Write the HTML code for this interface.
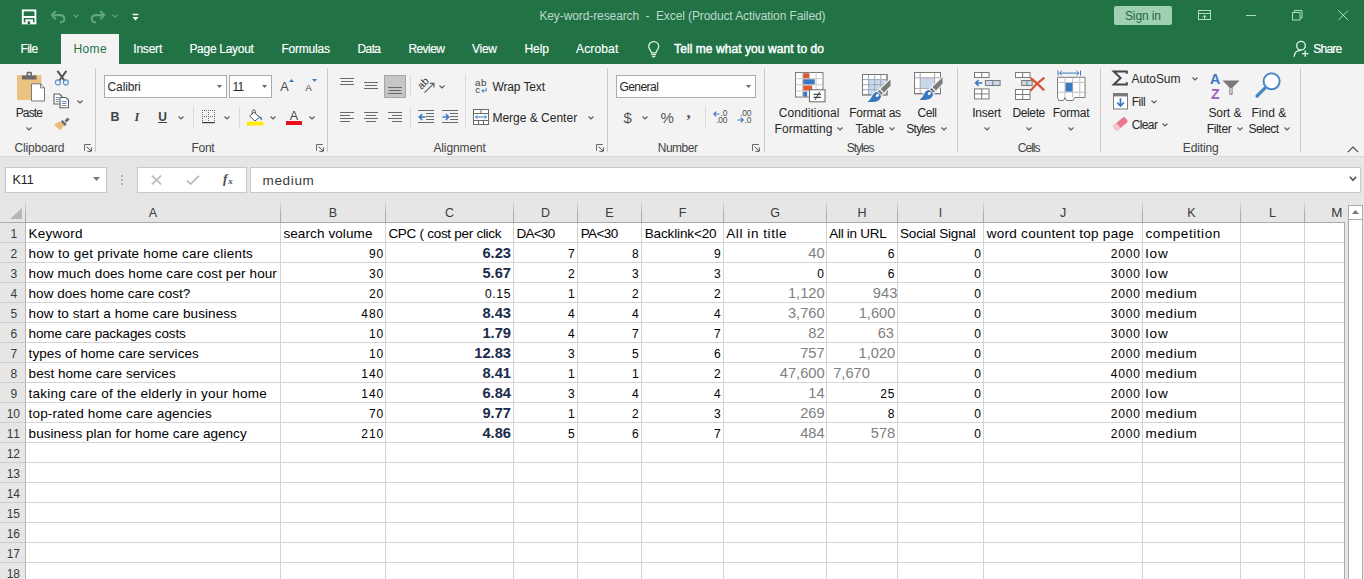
<!DOCTYPE html><html><head><meta charset="utf-8"><title>Key-word-research - Excel</title><style>
*{margin:0;padding:0;box-sizing:border-box}
html,body{width:1364px;height:579px;overflow:hidden;background:#fff}
body{font-family:"Liberation Sans",sans-serif;position:relative;color:#262626}
.a{position:absolute}
.t{position:absolute;white-space:pre;line-height:1;font-family:"Liberation Sans",sans-serif}
svg{position:absolute;overflow:visible}
</style></head><body>
<div class="a" style="left:0px;top:0px;width:1364px;height:64px;background:#217346;"></div>
<div class="a" style="left:0px;top:64px;width:1364px;height:93px;background:#f3f3f3;"></div>
<div class="a" style="left:0px;top:156px;width:1364px;height:1px;background:#dadada;"></div>
<div class="a" style="left:0px;top:157px;width:1364px;height:66px;background:#e6e6e6;"></div>
<div class="a" style="left:61px;top:34px;width:58px;height:30px;background:#f3f3f3;"></div>
<svg style="left:21px;top:9px" width="16" height="16" viewBox="0 0 16 16">
<rect x="1.8" y="1.4" width="12.6" height="13" fill="none" stroke="#fff" stroke-width="1.9"/>
<rect x="2" y="7" width="12" height="2" fill="#fff"/>
<rect x="4.4" y="10.4" width="7.6" height="4.6" fill="#fff"/>
<rect x="6.6" y="12.3" width="2.6" height="2.8" fill="#217346"/>
</svg>
<svg style="left:50px;top:9px" width="16" height="15" viewBox="0 0 16 15">
<path d="M5.8 2 L1.8 6.1 L5.8 10.2" fill="none" stroke="#62a380" stroke-width="2.1"/>
<path d="M2.2 6.1 H9.8 C12.6 6.1 14.3 7.8 14.3 10 C14.3 12.2 12.8 13.4 10 13.4" fill="none" stroke="#62a380" stroke-width="2.1"/>
</svg>
<svg style="left:72.5px;top:14.3px" width="6" height="4" viewBox="0 0 6 4"><path d="M0.5 0.6 L3 3.1 L5.5 0.6" fill="none" stroke="#62a380" stroke-width="1.3"/></svg>
<svg style="left:89.5px;top:9px" width="16" height="15" viewBox="0 0 16 15">
<g transform="translate(16,0) scale(-1,1)">
<path d="M5.8 2 L1.8 6.1 L5.8 10.2" fill="none" stroke="#62a380" stroke-width="2.1"/>
<path d="M2.2 6.1 H9.8 C12.6 6.1 14.3 7.8 14.3 10 C14.3 12.2 12.8 13.4 10 13.4" fill="none" stroke="#62a380" stroke-width="2.1"/>
</g></svg>
<svg style="left:111.5px;top:14.3px" width="6" height="4" viewBox="0 0 6 4"><path d="M0.5 0.6 L3 3.1 L5.5 0.6" fill="none" stroke="#62a380" stroke-width="1.3"/></svg>
<svg style="left:132px;top:13px" width="7" height="8" viewBox="0 0 7 8"><rect x="0.6" y="0.8" width="5.8" height="1.4" fill="#fff"/><path d="M0.4 3.9 H6.6 L3.5 7.6 Z" fill="#fff"/></svg>
<div class="a" style="left:1114px;top:6px;width:58px;height:19px;background:#a0d0b4;border-radius:2px;"></div>
<svg style="left:1197px;top:9px" width="15" height="12" viewBox="0 0 15 12">
<rect x="1.5" y="1.5" width="12" height="9" fill="none" stroke="#b4dcc6" stroke-width="1"/>
<rect x="1.5" y="4" width="12" height="1" fill="#b4dcc6"/>
<path d="M7.5 10.5 V6.4 M5.3 8.4 L7.5 6.2 L9.7 8.4" fill="none" stroke="#b4dcc6" stroke-width="1"/>
</svg>
<div class="a" style="left:1246px;top:15px;width:10px;height:1px;background:#aadcc0;"></div>
<svg style="left:1292px;top:10px" width="11" height="11" viewBox="0 0 11 11">
<rect x="0.5" y="2.5" width="7.5" height="7.5" fill="none" stroke="#aadcc0" stroke-width="1"/>
<path d="M2.5 2.5 V0.5 H10 V8 H8" fill="none" stroke="#aadcc0" stroke-width="1"/>
</svg>
<svg style="left:1338px;top:10px" width="11" height="11" viewBox="0 0 11 11"><path d="M0.3 0.3 L10.2 10.2 M10.2 0.3 L0.3 10.2" stroke="#aadcc0" stroke-width="1" fill="none"/></svg>
<svg style="left:647px;top:40px" width="14" height="18" viewBox="0 0 14 18">
<path d="M4.4 12.8 C4.4 10.6 1.7 9.4 1.7 6.6 C1.7 3.7 3.9 1.7 6.7 1.7 C9.5 1.7 11.7 3.7 11.7 6.6 C11.7 9.4 9 10.6 9 12.8 Z" fill="none" stroke="#e4f7ec" stroke-width="1.25"/>
<path d="M4.4 14.6 H9 M5.2 16.6 H8.2" stroke="#e4f7ec" stroke-width="1.1" fill="none"/>
</svg>
<svg style="left:1293px;top:40px" width="17" height="18" viewBox="0 0 17 18">
<circle cx="8" cy="5.7" r="4.3" fill="none" stroke="#e4f7ec" stroke-width="1.3"/>
<path d="M1.3 16.8 C1.3 12.8 4 10.6 7.4 10.4" fill="none" stroke="#e4f7ec" stroke-width="1.3"/>
<path d="M12.2 10.4 V16.8 M9 13.6 H15.4" stroke="#e4f7ec" stroke-width="1.3" fill="none"/>
</svg>
<div class="a" style="left:95px;top:68px;width:1px;height:84px;background:#c9c9c9;"></div>
<div class="a" style="left:327px;top:68px;width:1px;height:84px;background:#c9c9c9;"></div>
<div class="a" style="left:607px;top:68px;width:1px;height:84px;background:#c9c9c9;"></div>
<div class="a" style="left:764px;top:68px;width:1px;height:84px;background:#c9c9c9;"></div>
<div class="a" style="left:957px;top:68px;width:1px;height:84px;background:#c9c9c9;"></div>
<div class="a" style="left:1100px;top:68px;width:1px;height:84px;background:#c9c9c9;"></div>
<div class="a" style="left:1300px;top:68px;width:1px;height:84px;background:#c9c9c9;"></div>
<svg style="left:16px;top:71px" width="30" height="31" viewBox="0 0 30 31">
<rect x="1" y="4" width="24.5" height="25" rx="1" fill="#eac282"/>
<path d="M6 8.5 V4.5 H10.5 V2.2 Q10.5 0.8 12 0.8 H14.5 Q16 0.8 16 2.2 V4.5 H20.5 V8.5 Z" fill="#6a6a6a"/>
<rect x="12.2" y="2.2" width="2.2" height="2" fill="#f3f3f3"/>
<path d="M15.5 12.8 H24.5 L28.5 16.8 V30 H15.5 Z" fill="#fff" stroke="#7a7a7a" stroke-width="1"/>
<path d="M24.5 12.8 V16.8 H28.5" fill="none" stroke="#7a7a7a" stroke-width="1"/>
</svg>
<svg style="left:26.3px;top:126.6px" width="6" height="4" viewBox="0 0 6 4"><path d="M0.5 0.5 L3.0 3.0 L5.5 0.5" fill="none" stroke="#5a5a5a" stroke-width="1.1"/></svg>
<svg style="left:53.5px;top:69.5px" width="16" height="16" viewBox="0 0 16 16">
<path d="M3.4 0.8 L10.8 11 M12.4 0.8 L5 11" fill="none" stroke="#505050" stroke-width="2"/>
<circle cx="3.9" cy="12.4" r="2.5" fill="none" stroke="#5f93d1" stroke-width="1.2"/>
<circle cx="11.9" cy="12.4" r="2.5" fill="none" stroke="#5f93d1" stroke-width="1.2"/>
</svg>
<svg style="left:52.5px;top:93px" width="17" height="16" viewBox="0 0 17 16">
<path d="M1 1 H6.5 L9 3.5 V11 H1 Z" fill="#fff" stroke="#5e5e5e" stroke-width="1.1"/>
<path d="M2.8 4.5 H6 M2.8 6.5 H6 M2.8 8.5 H6" stroke="#5b86b8" stroke-width="0.9"/>
<path d="M7 4.5 H12.8 L15.5 7.2 V14.8 H7 Z" fill="#fff" stroke="#5e5e5e" stroke-width="1.1"/>
<path d="M8.8 8.5 H13.6 M8.8 10.5 H13.6 M8.8 12.5 H13.6" stroke="#5b86b8" stroke-width="0.9"/>
</svg>
<svg style="left:76.8px;top:99.8px" width="6" height="4" viewBox="0 0 6 4"><path d="M0.5 0.5 L3.0 3.0 L5.5 0.5" fill="none" stroke="#5a5a5a" stroke-width="1.1"/></svg>
<svg style="left:52.5px;top:116px" width="18" height="16" viewBox="0 0 18 16">
<path d="M7.2 5.2 L11.4 9.4 L6.8 14.6 L0.8 8.4 Z" fill="#eabf7c"/>
<path d="M8 4.4 L12.2 8.6 L14 6.8 L9.8 2.6 Z" fill="#6a6a6a" transform="translate(-0.2,1.4)"/>
<path d="M11.6 4.6 L14.6 1.4 L16.6 3.4 L13.4 6.4 Z" fill="#6a6a6a"/>
</svg>
<svg style="left:84px;top:144px" width="8" height="8" viewBox="0 0 8 8"><path d="M0.5 6.8 V0.5 H6.8" fill="none" stroke="#666" stroke-width="1"/><path d="M2.6 2.6 L7 7 M7.3 3.4 V7.3 H3.4" fill="none" stroke="#555" stroke-width="1"/></svg>
<div class="a" style="left:104px;top:75px;width:123px;height:23px;background:#fff;border:1px solid #ababab;"></div>
<svg style="left:217px;top:85px" width="5" height="3" viewBox="0 0 5 3"><path d="M0 0 H5 L2.5 3 Z" fill="#666"/></svg>
<div class="a" style="left:229px;top:75px;width:43px;height:23px;background:#fff;border:1px solid #ababab;"></div>
<svg style="left:262px;top:85px" width="5" height="3" viewBox="0 0 5 3"><path d="M0 0 H5 L2.5 3 Z" fill="#666"/></svg>
<svg style="left:288.5px;top:78.8px" width="5" height="3" viewBox="0 0 5 3"><path d="M0 3 H5 L2.5 0 Z" fill="#3b78c2"/></svg>
<svg style="left:312px;top:78.8px" width="5" height="3" viewBox="0 0 5 3"><path d="M0 0 H5 L2.5 3 Z" fill="#3b78c2"/></svg>
<div class="a" style="left:158px;top:122px;width:9px;height:1px;background:#444;"></div>
<svg style="left:178.2px;top:116px" width="6" height="4" viewBox="0 0 6 4"><path d="M0.5 0.5 L3.0 3.0 L5.5 0.5" fill="none" stroke="#5a5a5a" stroke-width="1.1"/></svg>
<div class="a" style="left:193px;top:107px;width:1px;height:21px;background:#dadada;"></div>
<svg style="left:202px;top:110px" width="14" height="14" viewBox="0 0 14 14"><g fill="#6e6e6e"><rect x="0" y="0" width="1" height="1"/><rect x="6" y="0" width="1" height="1"/><rect x="12" y="0" width="1" height="1"/><rect x="0" y="0" width="1" height="1"/><rect x="0" y="6" width="1" height="1"/><rect x="0" y="2" width="1" height="1"/><rect x="6" y="2" width="1" height="1"/><rect x="12" y="2" width="1" height="1"/><rect x="2" y="0" width="1" height="1"/><rect x="2" y="6" width="1" height="1"/><rect x="0" y="4" width="1" height="1"/><rect x="6" y="4" width="1" height="1"/><rect x="12" y="4" width="1" height="1"/><rect x="4" y="0" width="1" height="1"/><rect x="4" y="6" width="1" height="1"/><rect x="0" y="6" width="1" height="1"/><rect x="6" y="6" width="1" height="1"/><rect x="12" y="6" width="1" height="1"/><rect x="6" y="0" width="1" height="1"/><rect x="6" y="6" width="1" height="1"/><rect x="0" y="8" width="1" height="1"/><rect x="6" y="8" width="1" height="1"/><rect x="12" y="8" width="1" height="1"/><rect x="8" y="0" width="1" height="1"/><rect x="8" y="6" width="1" height="1"/><rect x="0" y="10" width="1" height="1"/><rect x="6" y="10" width="1" height="1"/><rect x="12" y="10" width="1" height="1"/><rect x="10" y="0" width="1" height="1"/><rect x="10" y="6" width="1" height="1"/><rect x="0" y="12" width="1" height="1"/><rect x="6" y="12" width="1" height="1"/><rect x="12" y="12" width="1" height="1"/><rect x="12" y="0" width="1" height="1"/><rect x="12" y="6" width="1" height="1"/></g><rect x="0" y="12" width="13" height="1.2" fill="#3a3a3a"/></svg>
<svg style="left:224.3px;top:116px" width="6" height="4" viewBox="0 0 6 4"><path d="M0.5 0.5 L3.0 3.0 L5.5 0.5" fill="none" stroke="#5a5a5a" stroke-width="1.1"/></svg>
<div class="a" style="left:239px;top:107px;width:1px;height:21px;background:#dadada;"></div>
<svg style="left:247px;top:108.5px" width="17" height="17" viewBox="0 0 17 17">
<path d="M6.8 3.2 L12.6 8.2 L8 12 L2.6 7.2 Z" fill="#fff" stroke="#5a5a5a" stroke-width="1"/>
<path d="M5.2 5.6 V2.6 Q5.2 0.8 6.8 0.8 Q8.4 0.8 8.4 2.6 V4.4" fill="none" stroke="#5a5a5a" stroke-width="1"/>
<path d="M12.8 7 Q15.8 8.6 15 11.6 Q13 10 12.2 8.6 Z" fill="#3b78c2"/>
<rect x="0" y="12.6" width="16.4" height="3.9" fill="#ffec00"/>
</svg>
<svg style="left:270px;top:116px" width="6" height="4" viewBox="0 0 6 4"><path d="M0.5 0.5 L3.0 3.0 L5.5 0.5" fill="none" stroke="#5a5a5a" stroke-width="1.1"/></svg>
<div class="a" style="left:286px;top:121px;width:16px;height:4px;background:#e8111a;"></div>
<svg style="left:309.2px;top:116px" width="6" height="4" viewBox="0 0 6 4"><path d="M0.5 0.5 L3.0 3.0 L5.5 0.5" fill="none" stroke="#5a5a5a" stroke-width="1.1"/></svg>
<svg style="left:316px;top:144px" width="8" height="8" viewBox="0 0 8 8"><path d="M0.5 6.8 V0.5 H6.8" fill="none" stroke="#666" stroke-width="1"/><path d="M2.6 2.6 L7 7 M7.3 3.4 V7.3 H3.4" fill="none" stroke="#555" stroke-width="1"/></svg>
<div class="a" style="left:340px;top:78px;width:14px;height:1px;background:#6a6a6a;"></div>
<div class="a" style="left:341px;top:81px;width:12px;height:1px;background:#6a6a6a;"></div>
<div class="a" style="left:340px;top:84px;width:14px;height:1px;background:#6a6a6a;"></div>
<div class="a" style="left:364px;top:82px;width:14px;height:1px;background:#6a6a6a;"></div>
<div class="a" style="left:365px;top:85px;width:12px;height:1px;background:#6a6a6a;"></div>
<div class="a" style="left:364px;top:88px;width:14px;height:1px;background:#6a6a6a;"></div>
<div class="a" style="left:384px;top:75px;width:22px;height:23px;background:#c6c6c6;border:1px solid #a6a6a6;"></div>
<div class="a" style="left:388px;top:87px;width:14px;height:1px;background:#6a6a6a;"></div>
<div class="a" style="left:389px;top:90px;width:12px;height:1px;background:#6a6a6a;"></div>
<div class="a" style="left:388px;top:93px;width:14px;height:1px;background:#6a6a6a;"></div>
<div class="a" style="left:410px;top:76px;width:1px;height:21px;background:#dadada;"></div>
<div class="a" style="left:410px;top:107px;width:1px;height:21px;background:#dadada;"></div>
<svg style="left:417px;top:77px" width="19" height="17" viewBox="0 0 19 17">
<g transform="translate(4.4,12.9) rotate(-45)"><text x="0" y="0" font-family="Liberation Sans" font-size="10.5" fill="#3c3c3c">ab</text></g>
<path d="M7.5 15.6 L16.8 6.6" stroke="#5a5a5a" stroke-width="1.1" fill="none"/>
<path d="M13 6.4 H17 V10.4" stroke="#5a5a5a" stroke-width="1.1" fill="none"/>
</svg>
<svg style="left:439.3px;top:84.6px" width="6" height="4" viewBox="0 0 6 4"><path d="M0.5 0.5 L3.0 3.0 L5.5 0.5" fill="none" stroke="#5a5a5a" stroke-width="1.1"/></svg>
<div class="a" style="left:465px;top:74px;width:1px;height:55px;background:#dadada;"></div>
<svg style="left:481px;top:88px" width="6" height="5" viewBox="0 0 6 5"><path d="M5.2 0 V2.8 H1" fill="none" stroke="#3b78c2" stroke-width="1"/><path d="M2.6 1 L0.8 2.8 L2.6 4.6" fill="none" stroke="#3b78c2" stroke-width="1"/></svg>
<div class="a" style="left:340px;top:112px;width:14px;height:1px;background:#6a6a6a;"></div>
<div class="a" style="left:340px;top:115px;width:10px;height:1px;background:#6a6a6a;"></div>
<div class="a" style="left:340px;top:118px;width:14px;height:1px;background:#6a6a6a;"></div>
<div class="a" style="left:340px;top:121px;width:10px;height:1px;background:#6a6a6a;"></div>
<div class="a" style="left:364px;top:112px;width:14px;height:1px;background:#6a6a6a;"></div>
<div class="a" style="left:366px;top:115px;width:10px;height:1px;background:#6a6a6a;"></div>
<div class="a" style="left:364px;top:118px;width:14px;height:1px;background:#6a6a6a;"></div>
<div class="a" style="left:366px;top:121px;width:10px;height:1px;background:#6a6a6a;"></div>
<div class="a" style="left:388px;top:112px;width:14px;height:1px;background:#6a6a6a;"></div>
<div class="a" style="left:392px;top:115px;width:10px;height:1px;background:#6a6a6a;"></div>
<div class="a" style="left:388px;top:118px;width:14px;height:1px;background:#6a6a6a;"></div>
<div class="a" style="left:392px;top:121px;width:10px;height:1px;background:#6a6a6a;"></div>
<div class="a" style="left:418px;top:110px;width:16px;height:1px;background:#6a6a6a;"></div>
<div class="a" style="left:426px;top:113px;width:8px;height:1px;background:#6a6a6a;"></div>
<div class="a" style="left:426px;top:116px;width:8px;height:1px;background:#6a6a6a;"></div>
<div class="a" style="left:426px;top:119px;width:8px;height:1px;background:#6a6a6a;"></div>
<div class="a" style="left:418px;top:122px;width:16px;height:1px;background:#6a6a6a;"></div>
<svg style="left:417.5px;top:112.5px" width="8" height="8" viewBox="0 0 8 8"><path d="M7.5 4 H1.5 M4.2 1 L1.2 4 L4.2 7" fill="none" stroke="#3b78c2" stroke-width="1.5"/></svg>
<div class="a" style="left:442px;top:110px;width:16px;height:1px;background:#6a6a6a;"></div>
<div class="a" style="left:450px;top:113px;width:8px;height:1px;background:#6a6a6a;"></div>
<div class="a" style="left:450px;top:116px;width:8px;height:1px;background:#6a6a6a;"></div>
<div class="a" style="left:450px;top:119px;width:8px;height:1px;background:#6a6a6a;"></div>
<div class="a" style="left:442px;top:122px;width:16px;height:1px;background:#6a6a6a;"></div>
<svg style="left:441.5px;top:112.5px" width="8" height="8" viewBox="0 0 8 8"><path d="M0.5 4 H6.5 M3.8 1 L6.8 4 L3.8 7" fill="none" stroke="#3b78c2" stroke-width="1.5"/></svg>
<svg style="left:472.5px;top:108.5px" width="16" height="16" viewBox="0 0 16 16">
<rect x="0.5" y="0.5" width="15" height="15" fill="#fff" stroke="#6a6a6a" stroke-width="1"/>
<path d="M0.5 4.5 H15.5 M0.5 11.5 H15.5 M8 0.5 V4.5 M5.5 11.5 V15.5 M10.5 11.5 V15.5" stroke="#6a6a6a" stroke-width="1" fill="none"/>
<path d="M2.5 8 H13.5 M4.5 6.2 L2.6 8 L4.5 9.8 M11.5 6.2 L13.4 8 L11.5 9.8" stroke="#3b78c2" stroke-width="1" fill="none"/>
</svg>
<svg style="left:588.4px;top:115.8px" width="6" height="4" viewBox="0 0 6 4"><path d="M0.5 0.5 L3.0 3.0 L5.5 0.5" fill="none" stroke="#5a5a5a" stroke-width="1.1"/></svg>
<svg style="left:596px;top:144px" width="8" height="8" viewBox="0 0 8 8"><path d="M0.5 6.8 V0.5 H6.8" fill="none" stroke="#666" stroke-width="1"/><path d="M2.6 2.6 L7 7 M7.3 3.4 V7.3 H3.4" fill="none" stroke="#555" stroke-width="1"/></svg>
<div class="a" style="left:616px;top:75px;width:140px;height:23px;background:#fff;border:1px solid #ababab;"></div>
<svg style="left:746px;top:85px" width="5" height="3" viewBox="0 0 5 3"><path d="M0 0 H5 L2.5 3 Z" fill="#666"/></svg>
<svg style="left:642.2px;top:116px" width="6" height="4" viewBox="0 0 6 4"><path d="M0.5 0.5 L3.0 3.0 L5.5 0.5" fill="none" stroke="#5a5a5a" stroke-width="1.1"/></svg>
<div class="a" style="left:705px;top:107px;width:1px;height:21px;background:#dadada;"></div>
<svg style="left:713px;top:110.5px" width="7" height="6" viewBox="0 0 7 6"><path d="M6.5 3 H1 M3.2 0.6 L0.8 3 L3.2 5.4" fill="none" stroke="#3b78c2" stroke-width="1.2"/></svg>
<svg style="left:737px;top:117px" width="7" height="6" viewBox="0 0 7 6"><path d="M0.5 3 H6 M3.8 0.6 L6.2 3 L3.8 5.4" fill="none" stroke="#3b78c2" stroke-width="1.2"/></svg>
<svg style="left:752px;top:144px" width="8" height="8" viewBox="0 0 8 8"><path d="M0.5 6.8 V0.5 H6.8" fill="none" stroke="#666" stroke-width="1"/><path d="M2.6 2.6 L7 7 M7.3 3.4 V7.3 H3.4" fill="none" stroke="#555" stroke-width="1"/></svg>
<svg style="left:794.5px;top:71.5px" width="32" height="31" viewBox="0 0 32 31">
<rect x="0.5" y="0.5" width="27.5" height="24.5" fill="#fff" stroke="#7a7a7a" stroke-width="1"/>
<path d="M0.5 6.6 H28 M0.5 12.8 H28 M0.5 19 H28 M7.5 0.5 V25 M14.3 0.5 V25 M21.1 0.5 V25" stroke="#c8c8c8" stroke-width="1" fill="none"/>
<rect x="8.2" y="1.2" width="6" height="5" fill="#e05a2f"/>
<rect x="8.2" y="7.3" width="11.6" height="5" fill="#3b78c2"/>
<rect x="8.2" y="13.5" width="9" height="5" fill="#e05a2f"/>
<rect x="8.2" y="19.7" width="4" height="5" fill="#3b78c2"/>
<rect x="14.5" y="17.8" width="15.5" height="12" fill="#fff" stroke="#6a6a6a" stroke-width="1"/>
<path d="M18.6 22.4 H26 M18.6 25.4 H26 M24.6 20 L20.2 27.8" stroke="#444" stroke-width="1.1" fill="none"/>
</svg>
<svg style="left:837.2px;top:126.7px" width="6" height="4" viewBox="0 0 6 4"><path d="M0.5 0.5 L3.0 3.0 L5.5 0.5" fill="none" stroke="#5a5a5a" stroke-width="1.1"/></svg>
<svg style="left:862px;top:73.6px" width="26" height="22" viewBox="0 0 26 22">
<rect x="0.5" y="0.5" width="24.5" height="20.4" fill="#fff" stroke="#7a7a7a" stroke-width="1"/>
<rect x="6.6" y="5.6" width="18" height="15" fill="#c9d8ea"/>
<path d="M0.5 5.6 H25 M0.5 10.7 H25 M0.5 15.8 H25 M6.6 0.5 V21 M12.7 0.5 V21 M18.8 0.5 V21" stroke="#9aa7b8" stroke-width="1" fill="none"/>
<rect x="0.5" y="0.5" width="24.5" height="20.4" fill="none" stroke="#7a7a7a" stroke-width="1"/>
</svg>
<svg style="left:867.3px;top:78.5px" width="24" height="24" viewBox="0 0 24 24">
<path d="M23.4 0.4 L23.6 6.6 L17 13.4 L13.6 10 Z" fill="none" stroke="#f3f3f3" stroke-width="2.4"/><path d="M12.6 10.8 L16 14.2 L14.4 15.8 L11 12.4 Z" fill="none" stroke="#f3f3f3" stroke-width="2.4"/><path d="M10.2 13 Q6.6 13.4 5.4 16.6 Q4 20.4 0.4 22.9 Q9.4 23.6 12.6 20.4 Q15 17.6 13.4 15.8 Z" fill="none" stroke="#f3f3f3" stroke-width="2.4"/>
<path d="M23.4 0.4 L23.6 6.6 L17 13.4 L13.6 10 Z" fill="#7a7a7a"/>
<path d="M12.6 10.8 L16 14.2 L14.4 15.8 L11 12.4 Z" fill="#7a7a7a"/>
<path d="M10.2 13 Q6.6 13.4 5.4 16.6 Q4 20.4 0.4 22.9 Q9.4 23.6 12.6 20.4 Q15 17.6 13.4 15.8 Z" fill="#3b78c2"/>
<ellipse cx="10.4" cy="16.4" rx="1.7" ry="1.3" fill="#fff" transform="rotate(-35 10.4 16.4)"/>
</svg>
<svg style="left:889px;top:126.7px" width="6" height="4" viewBox="0 0 6 4"><path d="M0.5 0.5 L3.0 3.0 L5.5 0.5" fill="none" stroke="#5a5a5a" stroke-width="1.1"/></svg>
<svg style="left:913.5px;top:71.5px" width="28" height="23" viewBox="0 0 28 23">
<rect x="0.5" y="0.5" width="26" height="21.2" fill="#fff" stroke="#7a7a7a" stroke-width="1"/>
<rect x="6.2" y="5.8" width="14.4" height="10.6" fill="#c9d8ea"/>
<path d="M0.5 5.8 H26.5 M0.5 16.4 H26.5 M6.2 0.5 V21.7 M20.6 0.5 V21.7" stroke="#a8a8a8" stroke-width="1" fill="none"/>
<rect x="0.5" y="0.5" width="26" height="21.2" fill="none" stroke="#7a7a7a" stroke-width="1"/>
</svg>
<svg style="left:919.2px;top:76.8px" width="24" height="24" viewBox="0 0 24 24">
<path d="M23.4 0.4 L23.6 6.6 L17 13.4 L13.6 10 Z" fill="none" stroke="#f3f3f3" stroke-width="2.4"/><path d="M12.6 10.8 L16 14.2 L14.4 15.8 L11 12.4 Z" fill="none" stroke="#f3f3f3" stroke-width="2.4"/><path d="M10.2 13 Q6.6 13.4 5.4 16.6 Q4 20.4 0.4 22.9 Q9.4 23.6 12.6 20.4 Q15 17.6 13.4 15.8 Z" fill="none" stroke="#f3f3f3" stroke-width="2.4"/>
<path d="M23.4 0.4 L23.6 6.6 L17 13.4 L13.6 10 Z" fill="#7a7a7a"/>
<path d="M12.6 10.8 L16 14.2 L14.4 15.8 L11 12.4 Z" fill="#7a7a7a"/>
<path d="M10.2 13 Q6.6 13.4 5.4 16.6 Q4 20.4 0.4 22.9 Q9.4 23.6 12.6 20.4 Q15 17.6 13.4 15.8 Z" fill="#3b78c2"/>
<ellipse cx="10.4" cy="16.4" rx="1.7" ry="1.3" fill="#fff" transform="rotate(-35 10.4 16.4)"/>
</svg>
<svg style="left:940.5px;top:126.7px" width="6" height="4" viewBox="0 0 6 4"><path d="M0.5 0.5 L3.0 3.0 L5.5 0.5" fill="none" stroke="#5a5a5a" stroke-width="1.1"/></svg>
<svg style="left:974px;top:72px" width="27" height="28" viewBox="0 0 27 28">
<rect x="0.5" y="0.5" width="14.5" height="5" fill="#fff" stroke="#7a7a7a"/><path d="M7.7 0.5 V5.5" stroke="#7a7a7a"/>
<rect x="11.4" y="8.5" width="14.7" height="5" fill="#c9d8ea" stroke="#7a7a7a"/><path d="M18.8 8.5 V13.5" stroke="#7a7a7a"/>
<path d="M8.2 11 H2 M4.6 8.2 L1.6 11 L4.6 13.8" fill="none" stroke="#3b78c2" stroke-width="1.6"/>
<rect x="0.5" y="16.9" width="14.5" height="10" fill="#fff" stroke="#7a7a7a"/><path d="M7.7 16.9 V26.9 M0.5 21.9 H15" stroke="#7a7a7a"/>
</svg>
<svg style="left:984px;top:126.7px" width="6" height="4" viewBox="0 0 6 4"><path d="M0.5 0.5 L3.0 3.0 L5.5 0.5" fill="none" stroke="#5a5a5a" stroke-width="1.1"/></svg>
<svg style="left:1015px;top:72px" width="31" height="29" viewBox="0 0 31 29">
<rect x="0.5" y="0.5" width="14.5" height="5" fill="#fff" stroke="#7a7a7a"/><path d="M7.7 0.5 V5.5" stroke="#7a7a7a"/>
<rect x="6.7" y="8.5" width="10.5" height="5" fill="#c9d8ea" stroke="#7a7a7a"/><path d="M12 8.5 V13.5" stroke="#7a7a7a"/>
<rect x="0.5" y="17.5" width="14.5" height="10" fill="#fff" stroke="#7a7a7a"/><path d="M7.7 17.5 V27.5 M0.5 22.5 H15" stroke="#7a7a7a"/>
<path d="M15.6 6 Q22 11 29.2 18.4 M29.4 5.6 Q21 11.6 15.4 18.8" fill="none" stroke="#d9553a" stroke-width="2.3"/>
</svg>
<svg style="left:1026.3px;top:126.7px" width="6" height="4" viewBox="0 0 6 4"><path d="M0.5 0.5 L3.0 3.0 L5.5 0.5" fill="none" stroke="#5a5a5a" stroke-width="1.1"/></svg>
<svg style="left:1056.5px;top:70px" width="29" height="32" viewBox="0 0 29 32">
<path d="M1 0.6 V5.6 M23.5 0.6 V5.6 M2.5 3.1 H22 M5 0.8 L2.6 3.1 L5 5.4 M19.5 0.8 L21.9 3.1 L19.5 5.4" fill="none" stroke="#3b78c2" stroke-width="1"/>
<path d="M0.5 7.3 H28 V27.5 H17.5 L16 30.5 H9.5 L8 27.5 L6.5 30.5 H1.8 L0.5 27.5 Z" fill="#fff" stroke="#7a7a7a" stroke-width="1"/>
<path d="M0.5 12.4 H28 M0.5 22.2 H28 M8 7.3 V27.5 M15.6 7.3 V27.5 M22.8 7.3 V27.5" stroke="#c0c0c0" stroke-width="1" fill="none"/>
<rect x="8.5" y="13" width="7" height="8.6" fill="#3b78c2"/>
</svg>
<svg style="left:1068px;top:126.7px" width="6" height="4" viewBox="0 0 6 4"><path d="M0.5 0.5 L3.0 3.0 L5.5 0.5" fill="none" stroke="#5a5a5a" stroke-width="1.1"/></svg>
<svg style="left:1111.5px;top:69.5px" width="17" height="16" viewBox="0 0 17 16">
<path d="M14.8 3.8 V1.4 H1.8 L8.6 8 L1.8 14.6 H14.8 V12.2" fill="none" stroke="#454545" stroke-width="2"/>
</svg>
<svg style="left:1192.3px;top:76.7px" width="6" height="4" viewBox="0 0 6 4"><path d="M0.5 0.5 L3.0 3.0 L5.5 0.5" fill="none" stroke="#5a5a5a" stroke-width="1.1"/></svg>
<svg style="left:1112.5px;top:92.7px" width="15" height="17" viewBox="0 0 15 17">
<rect x="0.5" y="0.5" width="14" height="15.5" fill="#fff" stroke="#7a7a7a"/>
<rect x="0" y="0" width="15" height="3.4" fill="#7a7a7a"/>
<path d="M7.5 5.2 V13 M4.2 9.6 L7.5 13 L10.8 9.6" fill="none" stroke="#3b78c2" stroke-width="1.7"/>
</svg>
<svg style="left:1150.5px;top:99.7px" width="6" height="4" viewBox="0 0 6 4"><path d="M0.5 0.5 L3.0 3.0 L5.5 0.5" fill="none" stroke="#5a5a5a" stroke-width="1.1"/></svg>
<svg style="left:1112.5px;top:116.5px" width="15" height="14" viewBox="0 0 15 14">
<g transform="translate(7.4,6.9) rotate(-40)">
<rect x="-7.6" y="-3.2" width="15.2" height="6.4" rx="1.6" fill="#e9768e"/>
<rect x="-7.6" y="-3.2" width="5.2" height="6.4" rx="1.6" fill="#f6c4ce"/>
<rect x="-4.4" y="-3.2" width="2" height="6.4" fill="#f6c4ce"/>
</g></svg>
<svg style="left:1162.2px;top:122.7px" width="6" height="4" viewBox="0 0 6 4"><path d="M0.5 0.5 L3.0 3.0 L5.5 0.5" fill="none" stroke="#5a5a5a" stroke-width="1.1"/></svg>
<svg style="left:1221.5px;top:79.5px" width="18" height="16" viewBox="0 0 18 16">
<path d="M0.5 0.6 H17.5 L10.6 7.6 V14.8 H7.4 V7.6 Z" fill="#7a7a7a"/>
<rect x="8.4" y="8" width="1.2" height="5.8" fill="#f3f3f3"/>
</svg>
<svg style="left:1236.5px;top:126.7px" width="6" height="4" viewBox="0 0 6 4"><path d="M0.5 0.5 L3.0 3.0 L5.5 0.5" fill="none" stroke="#5a5a5a" stroke-width="1.1"/></svg>
<svg style="left:1254px;top:70px" width="30" height="30" viewBox="0 0 30 30">
<circle cx="17.6" cy="11.3" r="8" fill="#fff" stroke="#4a86c4" stroke-width="2"/>
<path d="M11.4 17.6 L3 26" stroke="#4a86c4" stroke-width="3.2" stroke-linecap="round"/>
</svg>
<svg style="left:1283.6px;top:126.7px" width="6" height="4" viewBox="0 0 6 4"><path d="M0.5 0.5 L3.0 3.0 L5.5 0.5" fill="none" stroke="#5a5a5a" stroke-width="1.1"/></svg>
<svg style="left:1347px;top:146px" width="12" height="7" viewBox="0 0 12 7"><path d="M0.8 6.2 L6 1 L11.2 6.2" fill="none" stroke="#444" stroke-width="1.1"/></svg>
<div class="a" style="left:5px;top:167px;width:102px;height:26px;background:#fff;border:1px solid #c8c8c8;"></div>
<svg style="left:93px;top:177px" width="7" height="4" viewBox="0 0 7 4"><path d="M0 0 H7 L3.5 4 Z" fill="#777"/></svg>
<div class="a" style="left:121px;top:175px;width:2px;height:2px;background:#b4b4b4;"></div>
<div class="a" style="left:121px;top:179px;width:2px;height:2px;background:#b4b4b4;"></div>
<div class="a" style="left:121px;top:183px;width:2px;height:2px;background:#b4b4b4;"></div>
<div class="a" style="left:137px;top:167px;width:110px;height:26px;background:#fff;border:1px solid #c8c8c8;"></div>
<svg style="left:150.5px;top:174.8px" width="11" height="10" viewBox="0 0 11 10"><path d="M0.8 0.6 L10.2 9.4 M10.2 0.6 L0.8 9.4" stroke="#b8b8b8" stroke-width="1.5" fill="none"/></svg>
<svg style="left:185.5px;top:174.8px" width="14" height="10" viewBox="0 0 14 10"><path d="M0.8 5.4 L4.6 9 L13 0.8" stroke="#b8b8b8" stroke-width="1.7" fill="none"/></svg>
<div class="a" style="left:250px;top:167px;width:1111px;height:26px;background:#fff;border:1px solid #c8c8c8;"></div>
<svg style="left:1349px;top:176px" width="8" height="6" viewBox="0 0 8 6"><path d="M0.8 0.8 L4 4.4 L7.2 0.8" fill="none" stroke="#555" stroke-width="1.6"/></svg>
<div class="a" style="left:26px;top:223px;width:1319px;height:356px;background:#fff;"></div>
<div class="a" style="left:0px;top:223px;width:25px;height:356px;background:#e6e6e6;"></div>
<div class="a" style="left:1345px;top:203px;width:19px;height:376px;background:#e6e6e6;"></div>
<div class="a" style="left:26px;top:242px;width:1319px;height:1px;background:#d4d4d4;"></div>
<div class="a" style="left:0px;top:242px;width:25px;height:1px;background:#cdcdcd;"></div>
<div class="a" style="left:26px;top:262px;width:1319px;height:1px;background:#d4d4d4;"></div>
<div class="a" style="left:0px;top:262px;width:25px;height:1px;background:#cdcdcd;"></div>
<div class="a" style="left:26px;top:282px;width:1319px;height:1px;background:#d4d4d4;"></div>
<div class="a" style="left:0px;top:282px;width:25px;height:1px;background:#cdcdcd;"></div>
<div class="a" style="left:26px;top:302px;width:1319px;height:1px;background:#d4d4d4;"></div>
<div class="a" style="left:0px;top:302px;width:25px;height:1px;background:#cdcdcd;"></div>
<div class="a" style="left:26px;top:322px;width:1319px;height:1px;background:#d4d4d4;"></div>
<div class="a" style="left:0px;top:322px;width:25px;height:1px;background:#cdcdcd;"></div>
<div class="a" style="left:26px;top:342px;width:1319px;height:1px;background:#d4d4d4;"></div>
<div class="a" style="left:0px;top:342px;width:25px;height:1px;background:#cdcdcd;"></div>
<div class="a" style="left:26px;top:362px;width:1319px;height:1px;background:#d4d4d4;"></div>
<div class="a" style="left:0px;top:362px;width:25px;height:1px;background:#cdcdcd;"></div>
<div class="a" style="left:26px;top:382px;width:1319px;height:1px;background:#d4d4d4;"></div>
<div class="a" style="left:0px;top:382px;width:25px;height:1px;background:#cdcdcd;"></div>
<div class="a" style="left:26px;top:402px;width:1319px;height:1px;background:#d4d4d4;"></div>
<div class="a" style="left:0px;top:402px;width:25px;height:1px;background:#cdcdcd;"></div>
<div class="a" style="left:26px;top:422px;width:1319px;height:1px;background:#d4d4d4;"></div>
<div class="a" style="left:0px;top:422px;width:25px;height:1px;background:#cdcdcd;"></div>
<div class="a" style="left:26px;top:442px;width:1319px;height:1px;background:#d4d4d4;"></div>
<div class="a" style="left:0px;top:442px;width:25px;height:1px;background:#cdcdcd;"></div>
<div class="a" style="left:26px;top:462px;width:1319px;height:1px;background:#d4d4d4;"></div>
<div class="a" style="left:0px;top:462px;width:25px;height:1px;background:#cdcdcd;"></div>
<div class="a" style="left:26px;top:482px;width:1319px;height:1px;background:#d4d4d4;"></div>
<div class="a" style="left:0px;top:482px;width:25px;height:1px;background:#cdcdcd;"></div>
<div class="a" style="left:26px;top:502px;width:1319px;height:1px;background:#d4d4d4;"></div>
<div class="a" style="left:0px;top:502px;width:25px;height:1px;background:#cdcdcd;"></div>
<div class="a" style="left:26px;top:522px;width:1319px;height:1px;background:#d4d4d4;"></div>
<div class="a" style="left:0px;top:522px;width:25px;height:1px;background:#cdcdcd;"></div>
<div class="a" style="left:26px;top:542px;width:1319px;height:1px;background:#d4d4d4;"></div>
<div class="a" style="left:0px;top:542px;width:25px;height:1px;background:#cdcdcd;"></div>
<div class="a" style="left:26px;top:562px;width:1319px;height:1px;background:#d4d4d4;"></div>
<div class="a" style="left:0px;top:562px;width:25px;height:1px;background:#cdcdcd;"></div>
<div class="a" style="left:280px;top:223px;width:1px;height:356px;background:#d4d4d4;"></div>
<div class="a" style="left:280px;top:199px;width:1px;height:23px;background:linear-gradient(to bottom, rgba(171,171,171,0) 0%, #ababab 70%);"></div>
<div class="a" style="left:385px;top:223px;width:1px;height:356px;background:#d4d4d4;"></div>
<div class="a" style="left:385px;top:199px;width:1px;height:23px;background:linear-gradient(to bottom, rgba(171,171,171,0) 0%, #ababab 70%);"></div>
<div class="a" style="left:513px;top:223px;width:1px;height:356px;background:#d4d4d4;"></div>
<div class="a" style="left:513px;top:199px;width:1px;height:23px;background:linear-gradient(to bottom, rgba(171,171,171,0) 0%, #ababab 70%);"></div>
<div class="a" style="left:577px;top:223px;width:1px;height:356px;background:#d4d4d4;"></div>
<div class="a" style="left:577px;top:199px;width:1px;height:23px;background:linear-gradient(to bottom, rgba(171,171,171,0) 0%, #ababab 70%);"></div>
<div class="a" style="left:641px;top:223px;width:1px;height:356px;background:#d4d4d4;"></div>
<div class="a" style="left:641px;top:199px;width:1px;height:23px;background:linear-gradient(to bottom, rgba(171,171,171,0) 0%, #ababab 70%);"></div>
<div class="a" style="left:723px;top:223px;width:1px;height:356px;background:#d4d4d4;"></div>
<div class="a" style="left:723px;top:199px;width:1px;height:23px;background:linear-gradient(to bottom, rgba(171,171,171,0) 0%, #ababab 70%);"></div>
<div class="a" style="left:826px;top:223px;width:1px;height:356px;background:#d4d4d4;"></div>
<div class="a" style="left:826px;top:199px;width:1px;height:23px;background:linear-gradient(to bottom, rgba(171,171,171,0) 0%, #ababab 70%);"></div>
<div class="a" style="left:897px;top:223px;width:1px;height:356px;background:#d4d4d4;"></div>
<div class="a" style="left:897px;top:199px;width:1px;height:23px;background:linear-gradient(to bottom, rgba(171,171,171,0) 0%, #ababab 70%);"></div>
<div class="a" style="left:983px;top:223px;width:1px;height:356px;background:#d4d4d4;"></div>
<div class="a" style="left:983px;top:199px;width:1px;height:23px;background:linear-gradient(to bottom, rgba(171,171,171,0) 0%, #ababab 70%);"></div>
<div class="a" style="left:1142px;top:223px;width:1px;height:356px;background:#d4d4d4;"></div>
<div class="a" style="left:1142px;top:199px;width:1px;height:23px;background:linear-gradient(to bottom, rgba(171,171,171,0) 0%, #ababab 70%);"></div>
<div class="a" style="left:1240px;top:223px;width:1px;height:356px;background:#d4d4d4;"></div>
<div class="a" style="left:1240px;top:199px;width:1px;height:23px;background:linear-gradient(to bottom, rgba(171,171,171,0) 0%, #ababab 70%);"></div>
<div class="a" style="left:1304px;top:223px;width:1px;height:356px;background:#d4d4d4;"></div>
<div class="a" style="left:1304px;top:199px;width:1px;height:23px;background:linear-gradient(to bottom, rgba(171,171,171,0) 0%, #ababab 70%);"></div>
<div class="a" style="left:1344px;top:223px;width:1px;height:356px;background:#d4d4d4;"></div>
<div class="a" style="left:25px;top:199px;width:1px;height:24px;background:linear-gradient(to bottom, rgba(171,171,171,0) 0%, #ababab 70%);"></div>
<div class="a" style="left:25px;top:223px;width:1px;height:356px;background:#b8b8b8;"></div>
<div class="a" style="left:0px;top:222px;width:1345px;height:1px;background:#ababab;"></div>
<div class="a" style="left:1344px;top:223px;width:1px;height:356px;background:#ababab;"></div>
<div class="a" style="left:1348px;top:205px;width:15px;height:15px;background:#fff;border:1px solid #ababab;"></div>
<svg style="left:1352px;top:210px" width="7" height="4" viewBox="0 0 7 4"><path d="M0 4 L3.5 0 L7 4 Z" fill="#777"/></svg>
<div class="a" style="left:1348px;top:219px;width:15px;height:360px;background:#fff;border:1px solid #ababab;border-bottom:none;"></div>
<svg style="left:10px;top:208px" width="12" height="11" viewBox="0 0 12 11"><path d="M12 0 L12 11 L0 11 Z" fill="#b7b7b7"/></svg>
<span class="t" style="top:9.94px;font-size:12px;color:#bfd8ca;letter-spacing:-0.098px;left:539.40px;">Key-word-research  -  Excel (Product Activation Failed)</span>
<span class="t" style="top:9.94px;font-size:12px;color:#1e6b40;letter-spacing:-0.144px;left:1125.00px;">Sign in</span>
<span class="t" style="top:42.54px;font-size:12px;color:#fff;letter-spacing:-0.535px;left:20.40px;-webkit-text-stroke:0.15px #fff;">File</span>
<span class="t" style="top:42.54px;font-size:12px;color:#fff;letter-spacing:-0.215px;left:133.30px;-webkit-text-stroke:0.15px #fff;">Insert</span>
<span class="t" style="top:42.54px;font-size:12px;color:#fff;letter-spacing:-0.285px;left:189.40px;-webkit-text-stroke:0.15px #fff;">Page Layout</span>
<span class="t" style="top:42.54px;font-size:12px;color:#fff;letter-spacing:-0.197px;left:281.40px;-webkit-text-stroke:0.15px #fff;">Formulas</span>
<span class="t" style="top:42.54px;font-size:12px;color:#fff;letter-spacing:-0.640px;left:357.60px;-webkit-text-stroke:0.15px #fff;">Data</span>
<span class="t" style="top:42.54px;font-size:12px;color:#fff;letter-spacing:-0.564px;left:408.40px;-webkit-text-stroke:0.15px #fff;">Review</span>
<span class="t" style="top:42.54px;font-size:12px;color:#fff;letter-spacing:-0.286px;left:472.00px;-webkit-text-stroke:0.15px #fff;">View</span>
<span class="t" style="top:42.54px;font-size:12px;color:#fff;letter-spacing:-0.082px;left:524.50px;-webkit-text-stroke:0.15px #fff;">Help</span>
<span class="t" style="top:42.54px;font-size:12px;color:#fff;letter-spacing:0.130px;left:576.10px;-webkit-text-stroke:0.15px #fff;">Acrobat</span>
<span class="t" style="top:42.54px;font-size:12px;color:#217346;letter-spacing:0.375px;left:73.50px;">Home</span>
<span class="t" style="top:42.54px;font-size:12px;color:#fff;letter-spacing:0.068px;left:674.10px;-webkit-text-stroke:0.45px #fff;">Tell me what you want to do</span>
<span class="t" style="top:42.84px;font-size:12px;color:#fff;letter-spacing:-0.773px;left:1313.30px;-webkit-text-stroke:0.2px #fff;">Share</span>
<span class="t" style="top:106.64px;font-size:12px;color:#262626;letter-spacing:-0.837px;left:15.70px;">Paste</span>
<span class="t" style="top:141.64px;font-size:12px;color:#444;letter-spacing:-0.167px;left:14.50px;">Clipboard</span>
<span class="t" style="top:80.74px;font-size:12px;color:#262626;letter-spacing:-0.146px;left:107.60px;">Calibri</span>
<span class="t" style="top:80.74px;font-size:12px;color:#262626;left:232.60px;letter-spacing:-0.8px;">11</span>
<span class="t" style="top:81.03px;font-size:12.6px;color:#4a4a4a;left:280.20px;">A</span>
<span class="t" style="top:83.40px;font-size:9.8px;color:#4a4a4a;left:305.20px;">A</span>
<span class="t" style="top:110.62px;font-size:12.5px;color:#444;font-weight:bold;left:110.50px;">B</span>
<span class="t" style="top:110.62px;font-size:12.5px;color:#444;font-weight:bold;font-style:italic;left:134.60px;font-family:'Liberation Serif',serif;">I</span>
<span class="t" style="top:110.84px;font-size:12px;color:#444;font-weight:bold;left:158.20px;">U</span>
<span class="t" style="top:109.53px;font-size:12.6px;color:#4a4a4a;left:289.70px;">A</span>
<span class="t" style="top:141.64px;font-size:12px;color:#444;letter-spacing:-0.259px;left:191.40px;">Font</span>
<span class="t" style="top:78.30px;font-size:9.8px;color:#404040;letter-spacing:0.490px;left:475.00px;">ab</span>
<span class="t" style="top:84.50px;font-size:9.8px;color:#404040;left:475.20px;">c</span>
<span class="t" style="top:80.64px;font-size:12px;color:#262626;letter-spacing:-0.117px;left:492.40px;">Wrap Text</span>
<span class="t" style="top:111.54px;font-size:12px;color:#262626;letter-spacing:0.003px;left:492.40px;">Merge &amp; Center</span>
<span class="t" style="top:141.64px;font-size:12px;color:#444;letter-spacing:-0.104px;left:433.40px;">Alignment</span>
<span class="t" style="top:80.74px;font-size:12px;color:#262626;letter-spacing:-0.544px;left:619.40px;">General</span>
<span class="t" style="top:109.50px;font-size:15px;color:#555;left:623.60px;">$</span>
<span class="t" style="top:109.90px;font-size:15px;color:#555;left:660.40px;">%</span>
<span class="t" style="top:104.41px;font-size:17px;color:#555;font-weight:bold;left:686.60px;font-family:'Liberation Serif',serif;">,</span>
<span class="t" style="top:109.10px;font-size:8.5px;color:#505050;letter-spacing:0.076px;left:720.40px;">.0</span>
<span class="t" style="top:115.70px;font-size:8.5px;color:#505050;letter-spacing:-0.229px;left:716.20px;">.00</span>
<span class="t" style="top:109.10px;font-size:8.5px;color:#505050;letter-spacing:-0.229px;left:740.20px;">.00</span>
<span class="t" style="top:115.70px;font-size:8.5px;color:#505050;letter-spacing:0.076px;left:744.40px;">.0</span>
<span class="t" style="top:141.64px;font-size:12px;color:#444;letter-spacing:-0.509px;left:657.80px;">Number</span>
<span class="t" style="top:106.64px;font-size:12px;color:#262626;letter-spacing:0.079px;left:778.70px;">Conditional</span>
<span class="t" style="top:122.54px;font-size:12px;color:#262626;letter-spacing:0.076px;left:774.50px;">Formatting</span>
<span class="t" style="top:106.64px;font-size:12px;color:#262626;letter-spacing:-0.284px;left:849.30px;">Format as</span>
<span class="t" style="top:122.54px;font-size:12px;color:#262626;letter-spacing:0.013px;left:855.50px;">Table</span>
<span class="t" style="top:106.64px;font-size:12px;color:#262626;letter-spacing:-0.477px;left:917.60px;">Cell</span>
<span class="t" style="top:122.54px;font-size:12px;color:#262626;letter-spacing:-0.670px;left:906.20px;">Styles</span>
<span class="t" style="top:141.64px;font-size:12px;color:#444;letter-spacing:-1.009px;left:846.80px;">Styles</span>
<span class="t" style="top:106.64px;font-size:12px;color:#262626;letter-spacing:-0.215px;left:972.20px;">Insert</span>
<span class="t" style="top:106.64px;font-size:12px;color:#262626;letter-spacing:-0.410px;left:1012.60px;">Delete</span>
<span class="t" style="top:106.64px;font-size:12px;color:#262626;letter-spacing:-0.215px;left:1052.70px;">Format</span>
<span class="t" style="top:141.64px;font-size:12px;color:#444;letter-spacing:-0.983px;left:1017.80px;">Cells</span>
<span class="t" style="top:72.64px;font-size:12px;color:#262626;letter-spacing:-0.070px;left:1131.50px;">AutoSum</span>
<span class="t" style="top:95.64px;font-size:12px;color:#262626;letter-spacing:-0.463px;left:1131.70px;">Fill</span>
<span class="t" style="top:118.54px;font-size:12px;color:#262626;letter-spacing:-0.612px;left:1131.70px;">Clear</span>
<span class="t" style="top:71.88px;font-size:14.2px;color:#3b78c2;font-weight:bold;left:1210.00px;">A</span>
<span class="t" style="top:86.78px;font-size:14.2px;color:#a05cc0;font-weight:bold;left:1210.90px;">Z</span>
<span class="t" style="top:106.64px;font-size:12px;color:#262626;letter-spacing:-0.064px;left:1208.40px;">Sort &amp;</span>
<span class="t" style="top:122.54px;font-size:12px;color:#262626;letter-spacing:-0.326px;left:1206.70px;">Filter</span>
<span class="t" style="top:106.64px;font-size:12px;color:#262626;letter-spacing:0.011px;left:1251.50px;">Find &amp;</span>
<span class="t" style="top:122.54px;font-size:12px;color:#262626;letter-spacing:-0.564px;left:1248.50px;">Select</span>
<span class="t" style="top:141.64px;font-size:12px;color:#444;letter-spacing:-0.144px;left:1182.80px;">Editing</span>
<span class="t" style="top:174.33px;font-size:12.6px;color:#262626;letter-spacing:-0.166px;left:12.50px;">K11</span>
<span class="t" style="top:172.40px;font-size:13px;color:#4a4a4a;font-weight:bold;font-style:italic;left:223.00px;font-family:'Liberation Serif',serif;">f</span>
<span class="t" style="top:176.58px;font-size:9px;color:#4a4a4a;font-weight:bold;font-style:italic;left:228.20px;font-family:'Liberation Serif',serif;">x</span>
<span class="t" style="top:173.57px;font-size:13.5px;color:#3a3a3a;letter-spacing:0.671px;left:262.50px;">medium</span>
<span class="t" style="top:206.82px;font-size:12.5px;color:#3a3a3a;left:148.50px;transform:translateX(-50%);left:153.0px;">A</span>
<span class="t" style="top:206.82px;font-size:12.5px;color:#3a3a3a;left:330.00px;transform:translateX(-50%);left:333.0px;">B</span>
<span class="t" style="top:206.82px;font-size:12.5px;color:#3a3a3a;left:445.75px;transform:translateX(-50%);left:449.5px;">C</span>
<span class="t" style="top:206.82px;font-size:12.5px;color:#3a3a3a;left:541.50px;transform:translateX(-50%);left:545.5px;">D</span>
<span class="t" style="top:206.82px;font-size:12.5px;color:#3a3a3a;left:606.50px;transform:translateX(-50%);left:609.5px;">E</span>
<span class="t" style="top:206.82px;font-size:12.5px;color:#3a3a3a;left:679.75px;transform:translateX(-50%);left:682.5px;">F</span>
<span class="t" style="top:206.82px;font-size:12.5px;color:#3a3a3a;left:770.75px;transform:translateX(-50%);left:775.0px;">G</span>
<span class="t" style="top:206.82px;font-size:12.5px;color:#3a3a3a;left:858.00px;transform:translateX(-50%);left:862.0px;">H</span>
<span class="t" style="top:206.82px;font-size:12.5px;color:#3a3a3a;left:939.50px;transform:translateX(-50%);left:940.5px;">I</span>
<span class="t" style="top:206.82px;font-size:12.5px;color:#3a3a3a;left:1060.25px;transform:translateX(-50%);left:1063.0px;">J</span>
<span class="t" style="top:206.82px;font-size:12.5px;color:#3a3a3a;left:1188.00px;transform:translateX(-50%);left:1191.5px;">K</span>
<span class="t" style="top:206.82px;font-size:12.5px;color:#3a3a3a;left:1270.00px;transform:translateX(-50%);left:1272.5px;">L</span>
<span class="t" style="top:206.06px;font-size:13.4px;color:#3a3a3a;left:1331.30px;">M</span>
<span class="t" style="top:228.24px;font-size:12px;color:#3a3a3a;left:10.55px;">1</span>
<span class="t" style="top:248.24px;font-size:12px;color:#3a3a3a;left:10.55px;">2</span>
<span class="t" style="top:268.24px;font-size:12px;color:#3a3a3a;left:10.55px;">3</span>
<span class="t" style="top:288.24px;font-size:12px;color:#3a3a3a;left:10.55px;">4</span>
<span class="t" style="top:308.24px;font-size:12px;color:#3a3a3a;left:10.55px;">5</span>
<span class="t" style="top:328.24px;font-size:12px;color:#3a3a3a;left:10.55px;">6</span>
<span class="t" style="top:348.24px;font-size:12px;color:#3a3a3a;left:10.55px;">7</span>
<span class="t" style="top:368.24px;font-size:12px;color:#3a3a3a;left:10.55px;">8</span>
<span class="t" style="top:388.24px;font-size:12px;color:#3a3a3a;left:10.55px;">9</span>
<span class="t" style="top:408.24px;font-size:12px;color:#3a3a3a;letter-spacing:-0.319px;left:6.80px;">10</span>
<span class="t" style="top:428.24px;font-size:12px;color:#3a3a3a;letter-spacing:0.571px;left:6.80px;">11</span>
<span class="t" style="top:448.24px;font-size:12px;color:#3a3a3a;letter-spacing:-0.319px;left:6.80px;">12</span>
<span class="t" style="top:468.24px;font-size:12px;color:#3a3a3a;letter-spacing:-0.319px;left:6.80px;">13</span>
<span class="t" style="top:488.24px;font-size:12px;color:#3a3a3a;letter-spacing:-0.319px;left:6.80px;">14</span>
<span class="t" style="top:508.24px;font-size:12px;color:#3a3a3a;letter-spacing:-0.319px;left:6.80px;">15</span>
<span class="t" style="top:528.24px;font-size:12px;color:#3a3a3a;letter-spacing:-0.319px;left:6.80px;">16</span>
<span class="t" style="top:548.24px;font-size:12px;color:#3a3a3a;letter-spacing:-0.319px;left:6.80px;">17</span>
<span class="t" style="top:568.24px;font-size:12px;color:#3a3a3a;letter-spacing:-0.319px;left:6.80px;">18</span>
<span class="t" style="top:227.07px;font-size:13.5px;color:#000;letter-spacing:0.240px;left:28.60px;">Keyword</span>
<span class="t" style="top:227.07px;font-size:13.5px;color:#000;letter-spacing:0.106px;left:283.40px;">search volume</span>
<span class="t" style="top:227.07px;font-size:13.5px;color:#000;letter-spacing:-0.282px;left:388.40px;">CPC ( cost per click</span>
<span class="t" style="top:227.07px;font-size:13.5px;color:#000;letter-spacing:-0.722px;left:516.40px;">DA&lt;30</span>
<span class="t" style="top:227.07px;font-size:13.5px;color:#000;letter-spacing:-0.588px;left:580.70px;">PA&lt;30</span>
<span class="t" style="top:227.07px;font-size:13.5px;color:#000;letter-spacing:-0.130px;left:644.70px;">Backlink&lt;20</span>
<span class="t" style="top:227.07px;font-size:13.5px;color:#000;letter-spacing:0.567px;left:726.30px;">All in title</span>
<span class="t" style="top:227.07px;font-size:13.5px;color:#000;letter-spacing:-0.273px;left:829.20px;">All in URL</span>
<span class="t" style="top:227.07px;font-size:13.5px;color:#000;letter-spacing:-0.190px;left:900.00px;">Social Signal</span>
<span class="t" style="top:227.07px;font-size:13.5px;color:#000;letter-spacing:0.284px;left:986.70px;">word countent top page</span>
<span class="t" style="top:227.07px;font-size:13.5px;color:#000;letter-spacing:0.572px;left:1145.50px;">competition</span>
<span class="t" style="top:247.07px;font-size:13.5px;color:#000;letter-spacing:0.233px;left:28.60px;">how to get private home care clients</span>
<span class="t" style="top:267.07px;font-size:13.5px;color:#000;letter-spacing:0.101px;left:28.60px;">how much does home care cost per hour</span>
<span class="t" style="top:287.07px;font-size:13.5px;color:#000;letter-spacing:0.014px;left:28.60px;">how does home care cost?</span>
<span class="t" style="top:307.07px;font-size:13.5px;color:#000;letter-spacing:0.083px;left:28.60px;">how to start a home care business</span>
<span class="t" style="top:327.07px;font-size:13.5px;color:#000;letter-spacing:-0.149px;left:28.60px;">home care packages costs</span>
<span class="t" style="top:347.07px;font-size:13.5px;color:#000;letter-spacing:0.084px;left:28.60px;">types of home care services</span>
<span class="t" style="top:367.07px;font-size:13.5px;color:#000;letter-spacing:0.034px;left:28.60px;">best home care services</span>
<span class="t" style="top:387.07px;font-size:13.5px;color:#000;letter-spacing:0.242px;left:28.60px;">taking care of the elderly in your home</span>
<span class="t" style="top:407.07px;font-size:13.5px;color:#000;letter-spacing:0.141px;left:28.60px;">top-rated home care agencies</span>
<span class="t" style="top:427.07px;font-size:13.5px;color:#000;letter-spacing:0.036px;left:28.60px;">business plan for home care agency</span>
<span class="t" style="top:248.34px;font-size:12px;color:#000;letter-spacing:0.781px;right:980.12px;">90</span>
<span class="t" style="top:248.34px;font-size:12px;color:#000;right:789.30px;">7</span>
<span class="t" style="top:248.34px;font-size:12px;color:#000;right:725.30px;">8</span>
<span class="t" style="top:248.34px;font-size:12px;color:#000;right:643.40px;">9</span>
<span class="t" style="top:248.34px;font-size:12px;color:#000;right:383.00px;">0</span>
<span class="t" style="top:248.34px;font-size:12px;color:#000;letter-spacing:0.879px;right:223.12px;">2000</span>
<span class="t" style="top:247.07px;font-size:13.5px;color:#000;letter-spacing:1.002px;left:1145.50px;">low</span>
<span class="t" style="top:268.34px;font-size:12px;color:#000;letter-spacing:0.781px;right:980.12px;">30</span>
<span class="t" style="top:268.34px;font-size:12px;color:#000;right:789.30px;">2</span>
<span class="t" style="top:268.34px;font-size:12px;color:#000;right:725.30px;">3</span>
<span class="t" style="top:268.34px;font-size:12px;color:#000;right:643.40px;">3</span>
<span class="t" style="top:268.34px;font-size:12px;color:#000;right:383.00px;">0</span>
<span class="t" style="top:268.34px;font-size:12px;color:#000;letter-spacing:0.879px;right:223.12px;">3000</span>
<span class="t" style="top:267.07px;font-size:13.5px;color:#000;letter-spacing:1.002px;left:1145.50px;">low</span>
<span class="t" style="top:288.34px;font-size:12px;color:#000;letter-spacing:0.781px;right:980.12px;">20</span>
<span class="t" style="top:288.34px;font-size:12px;color:#000;right:789.30px;">1</span>
<span class="t" style="top:288.34px;font-size:12px;color:#000;right:725.30px;">2</span>
<span class="t" style="top:288.34px;font-size:12px;color:#000;right:643.40px;">2</span>
<span class="t" style="top:288.34px;font-size:12px;color:#000;right:383.00px;">0</span>
<span class="t" style="top:288.34px;font-size:12px;color:#000;letter-spacing:0.879px;right:223.12px;">2000</span>
<span class="t" style="top:287.07px;font-size:13.5px;color:#000;letter-spacing:0.651px;left:1145.50px;">medium</span>
<span class="t" style="top:308.34px;font-size:12px;color:#000;letter-spacing:0.854px;right:980.05px;">480</span>
<span class="t" style="top:308.34px;font-size:12px;color:#000;right:789.30px;">4</span>
<span class="t" style="top:308.34px;font-size:12px;color:#000;right:725.30px;">4</span>
<span class="t" style="top:308.34px;font-size:12px;color:#000;right:643.40px;">4</span>
<span class="t" style="top:308.34px;font-size:12px;color:#000;right:383.00px;">0</span>
<span class="t" style="top:308.34px;font-size:12px;color:#000;letter-spacing:0.879px;right:223.12px;">3000</span>
<span class="t" style="top:307.07px;font-size:13.5px;color:#000;letter-spacing:0.651px;left:1145.50px;">medium</span>
<span class="t" style="top:328.34px;font-size:12px;color:#000;letter-spacing:0.781px;right:980.12px;">10</span>
<span class="t" style="top:328.34px;font-size:12px;color:#000;right:789.30px;">4</span>
<span class="t" style="top:328.34px;font-size:12px;color:#000;right:725.30px;">7</span>
<span class="t" style="top:328.34px;font-size:12px;color:#000;right:643.40px;">7</span>
<span class="t" style="top:328.34px;font-size:12px;color:#000;right:383.00px;">0</span>
<span class="t" style="top:328.34px;font-size:12px;color:#000;letter-spacing:0.879px;right:223.12px;">3000</span>
<span class="t" style="top:327.07px;font-size:13.5px;color:#000;letter-spacing:1.002px;left:1145.50px;">low</span>
<span class="t" style="top:348.34px;font-size:12px;color:#000;letter-spacing:0.781px;right:980.12px;">10</span>
<span class="t" style="top:348.34px;font-size:12px;color:#000;right:789.30px;">3</span>
<span class="t" style="top:348.34px;font-size:12px;color:#000;right:725.30px;">5</span>
<span class="t" style="top:348.34px;font-size:12px;color:#000;right:643.40px;">6</span>
<span class="t" style="top:348.34px;font-size:12px;color:#000;right:383.00px;">0</span>
<span class="t" style="top:348.34px;font-size:12px;color:#000;letter-spacing:0.879px;right:223.12px;">2000</span>
<span class="t" style="top:347.07px;font-size:13.5px;color:#000;letter-spacing:0.651px;left:1145.50px;">medium</span>
<span class="t" style="top:368.34px;font-size:12px;color:#000;letter-spacing:0.854px;right:980.05px;">140</span>
<span class="t" style="top:368.34px;font-size:12px;color:#000;right:789.30px;">1</span>
<span class="t" style="top:368.34px;font-size:12px;color:#000;right:725.30px;">1</span>
<span class="t" style="top:368.34px;font-size:12px;color:#000;right:643.40px;">2</span>
<span class="t" style="top:368.34px;font-size:12px;color:#000;right:383.00px;">0</span>
<span class="t" style="top:368.34px;font-size:12px;color:#000;letter-spacing:0.879px;right:223.12px;">4000</span>
<span class="t" style="top:367.07px;font-size:13.5px;color:#000;letter-spacing:0.651px;left:1145.50px;">medium</span>
<span class="t" style="top:388.34px;font-size:12px;color:#000;letter-spacing:0.854px;right:980.05px;">140</span>
<span class="t" style="top:388.34px;font-size:12px;color:#000;right:789.30px;">3</span>
<span class="t" style="top:388.34px;font-size:12px;color:#000;right:725.30px;">4</span>
<span class="t" style="top:388.34px;font-size:12px;color:#000;right:643.40px;">4</span>
<span class="t" style="top:388.34px;font-size:12px;color:#000;right:383.00px;">0</span>
<span class="t" style="top:388.34px;font-size:12px;color:#000;letter-spacing:0.879px;right:223.12px;">2000</span>
<span class="t" style="top:387.07px;font-size:13.5px;color:#000;letter-spacing:1.002px;left:1145.50px;">low</span>
<span class="t" style="top:408.34px;font-size:12px;color:#000;letter-spacing:0.781px;right:980.12px;">70</span>
<span class="t" style="top:408.34px;font-size:12px;color:#000;right:789.30px;">1</span>
<span class="t" style="top:408.34px;font-size:12px;color:#000;right:725.30px;">2</span>
<span class="t" style="top:408.34px;font-size:12px;color:#000;right:643.40px;">3</span>
<span class="t" style="top:408.34px;font-size:12px;color:#000;right:383.00px;">0</span>
<span class="t" style="top:408.34px;font-size:12px;color:#000;letter-spacing:0.879px;right:223.12px;">2000</span>
<span class="t" style="top:407.07px;font-size:13.5px;color:#000;letter-spacing:0.651px;left:1145.50px;">medium</span>
<span class="t" style="top:428.34px;font-size:12px;color:#000;letter-spacing:0.854px;right:980.05px;">210</span>
<span class="t" style="top:428.34px;font-size:12px;color:#000;right:789.30px;">5</span>
<span class="t" style="top:428.34px;font-size:12px;color:#000;right:725.30px;">6</span>
<span class="t" style="top:428.34px;font-size:12px;color:#000;right:643.40px;">7</span>
<span class="t" style="top:428.34px;font-size:12px;color:#000;right:383.00px;">0</span>
<span class="t" style="top:428.34px;font-size:12px;color:#000;letter-spacing:0.879px;right:223.12px;">2000</span>
<span class="t" style="top:427.07px;font-size:13.5px;color:#000;letter-spacing:0.651px;left:1145.50px;">medium</span>
<span class="t" style="top:246.08px;font-size:14.67px;color:#1c2b4b;font-weight:bold;right:853.00px;">6.23</span>
<span class="t" style="top:266.08px;font-size:14.67px;color:#1c2b4b;font-weight:bold;right:853.00px;">5.67</span>
<span class="t" style="top:288.34px;font-size:12px;color:#000;letter-spacing:0.727px;right:852.87px;">0.15</span>
<span class="t" style="top:306.08px;font-size:14.67px;color:#1c2b4b;font-weight:bold;right:853.00px;">8.43</span>
<span class="t" style="top:326.08px;font-size:14.67px;color:#1c2b4b;font-weight:bold;right:853.00px;">1.79</span>
<span class="t" style="top:346.08px;font-size:14.67px;color:#1c2b4b;font-weight:bold;right:853.00px;">12.83</span>
<span class="t" style="top:366.08px;font-size:14.67px;color:#1c2b4b;font-weight:bold;right:853.00px;">8.41</span>
<span class="t" style="top:386.08px;font-size:14.67px;color:#1c2b4b;font-weight:bold;right:853.00px;">6.84</span>
<span class="t" style="top:406.08px;font-size:14.67px;color:#1c2b4b;font-weight:bold;right:853.00px;">9.77</span>
<span class="t" style="top:426.08px;font-size:14.67px;color:#1c2b4b;font-weight:bold;right:853.00px;">4.86</span>
<span class="t" style="top:246.08px;font-size:14.67px;color:#808080;right:539.40px;">40</span>
<span class="t" style="top:268.34px;font-size:12px;color:#000;right:540.20px;">0</span>
<span class="t" style="top:286.08px;font-size:14.67px;color:#808080;right:539.40px;">1,120</span>
<span class="t" style="top:306.08px;font-size:14.67px;color:#808080;right:539.40px;">3,760</span>
<span class="t" style="top:326.08px;font-size:14.67px;color:#808080;right:539.40px;">82</span>
<span class="t" style="top:346.08px;font-size:14.67px;color:#808080;right:539.40px;">757</span>
<span class="t" style="top:366.08px;font-size:14.67px;color:#808080;right:539.40px;">47,600</span>
<span class="t" style="top:386.08px;font-size:14.67px;color:#808080;right:539.40px;">14</span>
<span class="t" style="top:406.08px;font-size:14.67px;color:#808080;right:539.40px;">269</span>
<span class="t" style="top:426.08px;font-size:14.67px;color:#808080;right:539.40px;">484</span>
<span class="t" style="top:248.34px;font-size:12px;color:#000;right:469.60px;">6</span>
<span class="t" style="top:268.34px;font-size:12px;color:#000;right:469.60px;">6</span>
<span class="t" style="top:286.08px;font-size:14.67px;color:#808080;right:466.70px;">943</span>
<span class="t" style="top:306.08px;font-size:14.67px;color:#808080;right:468.60px;">1,600</span>
<span class="t" style="top:326.08px;font-size:14.67px;color:#808080;right:470.00px;">63</span>
<span class="t" style="top:346.08px;font-size:14.67px;color:#808080;right:468.80px;">1,020</span>
<span class="t" style="top:366.08px;font-size:14.67px;color:#808080;left:833.20px;">7,670</span>
<span class="t" style="top:388.34px;font-size:12px;color:#000;letter-spacing:0.781px;right:468.82px;">25</span>
<span class="t" style="top:408.34px;font-size:12px;color:#000;right:469.60px;">8</span>
<span class="t" style="top:426.08px;font-size:14.67px;color:#808080;right:468.80px;">578</span>
</body></html>
